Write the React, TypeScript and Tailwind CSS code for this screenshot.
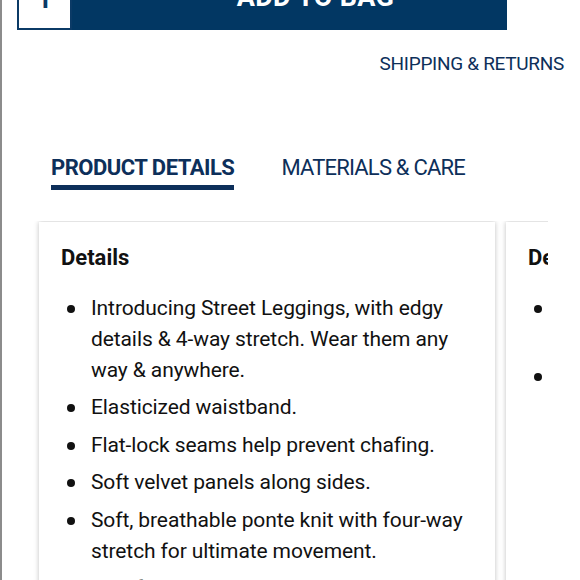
import React from 'react';

const details = [
  'Introducing Street Leggings, with edgy details & 4-way stretch. Wear them any way & anywhere.',
  'Elasticized waistband.',
  'Flat-lock seams help prevent chafing.',
  'Soft velvet panels along sides.',
  'Soft, breathable ponte knit with four-way stretch for ultimate movement.',
  'Two front pockets with a hidden key pocket for essentials.',
];

const Bullet: React.FC<{ children: React.ReactNode }> = ({ children }) => (
  <li className="flex text-[21px] leading-[31px] text-[#111] tracking-[-0.1px]">
    <span className="w-[30px] shrink-0 flex items-start pt-[12px] pl-[6px]">
      <span className="w-[8px] h-[8px] rounded-full bg-[#111]" />
    </span>
    <span>{children}</span>
  </li>
);

const App: React.FC = () => {
  return (
    <div className="h-[580px] overflow-hidden bg-white border-l-2 border-[#8c8c8c] font-['Roboto',sans-serif]">
      {/* Add to bag row (top cut off) */}
      <div className="flex ml-[15px] -mt-[31px] h-[61px] w-[490px]">
        <div className="w-[55px] border-2 border-[#0b3a66] flex items-center justify-center text-[#0b3a66] text-[26px] font-bold">
          1
        </div>
        <button className="flex-1 bg-[#023763] text-white text-[27px] font-bold tracking-[0.3px] flex items-center justify-center pl-[52px] pb-[4px]">
          ADD TO BAG
        </button>
      </div>

      <div className="flex justify-end pr-[16px] mt-[24px]">
        <a className="text-[19px] text-[#0d2f5a] leading-none tracking-[-0.3px]">SHIPPING &amp; RETURNS</a>
      </div>

      {/* Tabs */}
      <div className="flex items-start gap-[47px] ml-[49px] mt-[84px]">
        <div className="flex flex-col">
          <span className="text-[22px] font-bold text-[#0d2f5a] leading-none tracking-[-0.5px]">PRODUCT DETAILS</span>
          <span className="h-[5px] bg-[#0d2f5a] mt-[6px]" />
        </div>
        <span className="text-[22px] text-[#0d2f5a] leading-none tracking-[-0.8px]">MATERIALS &amp; CARE</span>
      </div>

      {/* Cards carousel */}
      <div className="w-[518px] ml-[28px] mt-[31px] overflow-hidden pt-[1px] pl-[9px]">
        <div className="flex gap-[11px]">
          <div className="w-[456px] shrink-0 bg-white shadow-[0_0_5px_rgba(0,0,0,0.25)] pt-[25px] px-[22px] pb-6">
            <h3 className="text-[22px] font-bold text-[#111] leading-none">Details</h3>
            <ul className="mt-[24px] flex flex-col gap-[6.4px]">
              {details.map((d, i) => (
                <Bullet key={i}>{d}</Bullet>
              ))}
            </ul>
          </div>
          <div className="w-[456px] shrink-0 bg-white shadow-[0_0_5px_rgba(0,0,0,0.25)] pt-[25px] px-[22px] pb-6">
            <h3 className="text-[22px] font-bold text-[#111] leading-none">Details</h3>
            <ul className="mt-[24px] flex flex-col gap-[6.4px]">
              <Bullet>Features a high-rise fit with a wide waistband.</Bullet>
              <Bullet>Full length.</Bullet>
            </ul>
          </div>
        </div>
      </div>
    </div>
  );
};

export default App;
